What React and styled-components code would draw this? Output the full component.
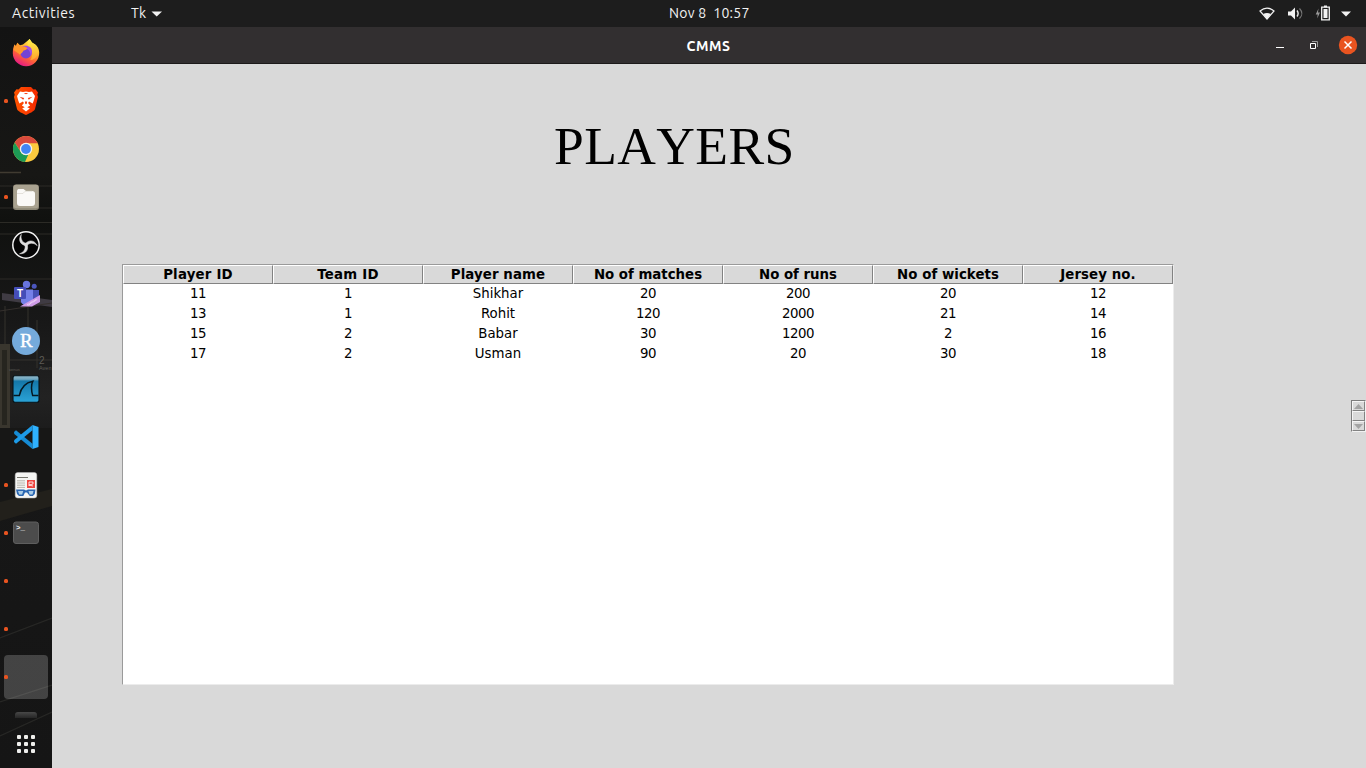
import React from "react";
import styled, { createGlobalStyle } from "styled-components";

const GlobalStyle = createGlobalStyle`
  * { box-sizing: border-box; }
  body { margin: 0; overflow: hidden; background: #d9d9d9; }
`;

const Desktop = styled.div`
  width: 1366px;
  height: 768px;
  display: flex;
  flex-direction: column;
  font-family: Ubuntu, "Noto Sans", sans-serif;
  overflow: hidden;
`;

const TopBar = styled.header`
  height: 27px;
  flex: none;
  background: #1d1d1d;
  color: #f2f2f2;
  display: grid;
  grid-template-columns: 1fr auto 1fr;
  align-items: center;
  font-size: 14px;
  line-height: 26px;
`;

const BarLeft = styled.div`
  display: flex;
  align-items: center;
  padding-left: 12px;
`;

const BarText = styled.span`
  display: block;
  white-space: pre;
  height: 27px;
  width: ${(p) => p.$width}px;
  margin-right: ${(p) => p.$gap || 0}px;
  letter-spacing: ${(p) => p.$spacing || 0}px;
`;

const Clock = styled(BarText)`
  margin-left: 54px;
`;

const BarRight = styled.div`
  display: flex;
  justify-content: flex-end;
  padding-right: 14px;
`;

const Workspace = styled.div`
  flex: 1;
  display: flex;
  min-height: 0;
`;

const Dock = styled.nav`
  width: 52px;
  flex: none;
  background: #151515;
  display: grid;
  overflow: hidden;

  > * { grid-area: 1 / 1; }
`;

const DockItems = styled.div`
  display: flex;
  flex-direction: column;
  padding-top: 2px;
  z-index: 1;
`;

const DockItem = styled.div`
  height: 48px;
  display: flex;
  align-items: center;
`;

const DockTile = styled.div`
  width: 44px;
  height: 44px;
  margin-left: 4px;
  border-radius: 4px;
  display: flex;
  align-items: center;
  justify-content: flex-start;
  background: ${(p) => (p.$active ? "rgba(255,255,255,0.2)" : "transparent")};
`;

const RunDot = styled.i`
  width: 4px;
  height: 4px;
  border-radius: 1.5px;
  flex: none;
  background: ${(p) => (p.$on ? "#e95420" : "transparent")};
`;

const DockIcon = styled.svg`
  width: 28px;
  height: 28px;
  margin-left: 4px;
  display: block;
`;

const HiddenLauncher = styled.div`
  width: 22px;
  height: 6px;
  margin: 11px 0 0 15px;
  border-radius: 3px 3px 0 0;
  background: linear-gradient(#484848, #262626);
`;

const AppsGrid = styled.div`
  display: grid;
  grid-template-columns: repeat(3, 4px);
  gap: 3px;
  margin: 17px 0 0 17px;
`;

const AppsDot = styled.i`
  height: 4px;
  border-radius: 1px;
  background: #eeeeec;
`;

const Window = styled.main`
  flex: 1;
  min-width: 0;
  display: flex;
  flex-direction: column;
  background: #d9d9d9;
`;

const TitleBar = styled.div`
  height: 37px;
  flex: none;
  background: #322f30;
  border-bottom: 1px solid #1c1a1a;
  display: grid;
  grid-template-columns: 1fr auto 1fr;
  align-items: start;
`;

const WindowTitle = styled.h1`
  grid-column: 2;
  margin: 0 1px 0 0;
  color: #fff;
  font-size: 14px;
  letter-spacing: 0.6px;
  line-height: 38px;
  height: 36px;
  font-weight: 700;
`;

const WindowControls = styled.div`
  display: flex;
  justify-content: flex-end;
  padding: 8px 8px 0 0;
`;

const Client = styled.div`
  flex: 1;
  display: flex;
  min-height: 0;
`;

const Content = styled.section`
  width: 1299px;
  flex: none;
`;

const Heading = styled.h2`
  margin: 0;
  padding: 52px 0 0 502px;
  height: 200px;
  color: #000;
  font: 400 53.5px/60px "Liberation Serif", serif;
  font-kerning: none;
  letter-spacing: 0.4px;
`;

const Table = styled.div`
  width: 1052px;
  height: 421px;
  margin-left: 70px;
  background: #fff;
  border: 1px solid;
  border-color: #9a9a9a #ececec #ececec #9a9a9a;
  color: #000;
  font-family: "DejaVu Sans", sans-serif;
  font-size: 13.33px;
`;

const Row = styled.div`
  display: grid;
  grid-template-columns: repeat(7, 150px);
  height: ${(p) => (p.$head ? 19 : 20)}px;
`;

const HeadCell = styled.div`
  background: #d9d9d9;
  border: 1px solid;
  border-color: #fff #828282 #828282 #fff;
  font-weight: 700;
  line-height: 17px;
  text-align: center;
  white-space: nowrap;
  letter-spacing: ${(p) => p.$spacing}px;
`;

const Cell = styled.div`
  line-height: 19px;
  text-align: center;
  white-space: nowrap;
  letter-spacing: ${(p) => (p.$numeric ? -0.45 : 0)}px;
`;

const ScrollBar = styled.div`
  width: 15px;
  height: 32px;
  margin-top: 336px;
  background: #c3c3c3;
  border: 1px solid;
  border-color: #7d7d7d #f2f2f2 #f2f2f2 #7d7d7d;
  display: flex;
  flex-direction: column;
`;

const ScrollPart = styled.div`
  height: 10px;
  background: #d9d9d9;
  border: 1px solid;
  border-color: #f5f5f5 #828282 #828282 #f5f5f5;
  display: flex;
  align-items: center;
  justify-content: center;
`;

const columns = [
  ["Player ID", 0.2],
  ["Team ID", 0.2],
  ["Player name", 0.1],
  ["No of matches", 0],
  ["No of runs", 0],
  ["No of wickets", 0.05],
  ["Jersey no.", 0.1],
];
const players = [
  [11, 1, "Shikhar", 20, 200, 20, 12],
  [13, 1, "Rohit", 120, 2000, 21, 14],
  [15, 2, "Babar", 30, 1200, 2, 16],
  [17, 2, "Usman", 90, 20, 30, 18],
];

const Firefox = () => (
  <DockIcon viewBox="0 0.7 28 28">
    <defs>
      <linearGradient id="fx" x1=".8" y1=".05" x2=".3" y2="1">
        <stop offset="0" stopColor="#fff44f" />
        <stop offset=".35" stopColor="#ffb52b" />
        <stop offset=".65" stopColor="#ff6038" />
        <stop offset="1" stopColor="#e5158b" />
      </linearGradient>
      <linearGradient id="fy" x1="0" y1="0" x2="0" y2="1">
        <stop offset="0" stopColor="#fff04a" />
        <stop offset="1" stopColor="#ffa62c" />
      </linearGradient>
    </defs>
    <path d="M2.500 6.200 4 8l1.300-3.500L8 7l3-.8L17.700.7l2.500 3.800c4 1.600 7 5 7 10A13.200 13.200 0 0 1 .8 15c0-3.600.6-6 1.700-8.800z" fill="url(#fx)" />
    <path d="M17.500.7c1.500 2 1.700 3.300 4 4.500 4.500 2.800 5.500 7 3.700 11.500-1.300 3.200-4 5-7 5 3-4 2.800-9-1-12.500-2.500-2.500-1.900-5.500.3-8.500z" fill="url(#fy)" />
    <circle cx="14" cy="14.500" r="5.700" fill="#7543d4" />
    <path d="M9 9c2-2 7-2.300 9.500.3C21 12 20 16 18.500 18c.3-4-1-6.500-4.500-7.800z" fill="#a550e5" />
    <path d="M2.500 6.200 4 8l1.300-3.500L8 8l4.500.2 2.800 1.500c-.2 1.500-2.300 2-4 2.800-.5 2-2.300 2.500-3.300 4C6 14 2.500 13 1.500 11.500z" fill="#ff982c" />
  </DockIcon>
);

const Brave = () => (
  <DockIcon viewBox="0 0 28 28">
    <defs>
      <linearGradient id="br" x1="0" x2="1">
        <stop offset="0" stopColor="#ff5500" />
        <stop offset="1" stopColor="#f52800" />
      </linearGradient>
    </defs>
    <path d="M9 0h10l2.500 2.500 2-.3L26 5.500l-.7 2.300.7 2.200-3 12c-.7 2.500-6 4.500-9 6-3-1.500-8.300-3.500-9-6L2 10l.7-2.200L2 5.500l2.500-3.300 2 .3z" fill="url(#br)" />
    <path d="m5 9 3-4.500 3 .5 3-.4 3 .4 3-.5L23 9l-1.400 5-1 2.500-3.500-2-1 1.500 2 2.500-4.100 2.500-4.100-2.500 2-2.500-1-1.500-3.500 2-1-2.500z" fill="#fff" />
    <path d="m7.500 9.700 4.700 1.200-1 1.800zm13 0-4.700 1.200 1 1.800zM11.700 6h4.600L14 7.200zM12.900 14.500h2.200l-.3 2.200-.8.500-.8-.5z" fill="#f43b10" />
    <path d="m10.200 21.500 3.800-2 3.800 2-3.800 2.900z" fill="#fff" />
  </DockIcon>
);

const Chrome = () => (
  <DockIcon viewBox="0 0 28 28">
    <circle cx="14" cy="14" r="13" fill="#fbca3e" />
    <path d="M2.700 7.500A13 13 0 0 1 25.700 8.200H14a6 6 0 0 0-5.200 8.600z" fill="#d94a3d" />
    <path d="M2.700 7.500 8.800 17a6 6 0 0 0 7.500 2.600L13 27A13 13 0 0 1 2.700 7.500z" fill="#1c9b55" />
    <circle cx="14" cy="14" r="6.200" fill="#f2f2f2" />
    <circle cx="14" cy="14" r="4.900" fill="#4285f4" />
  </DockIcon>
);

const Files = () => (
  <DockIcon viewBox="0 0 28 28">
    <rect x="1" y="1.500" width="26" height="25.500" rx="3" fill="#8e8877" />
    <rect x="1.700" y="1.700" width="24.600" height="23.500" rx="2.500" fill="#a9a290" />
    <path d="M5 8.500C5 6.500 6 6 7.500 6h4l2.500 2h6c2 0 3 1 3 2.800V20c0 2-1 3-3 3H8c-2 0-3-1-3-3z" fill="#faf9f7" />
    <path d="M5 10.500h6l2-2.200h7" fill="none" stroke="#dad7cf" strokeWidth=".7" />
  </DockIcon>
);

const obsBlade = "M14.800 14.700C9.200 14.600 5.200 9.500 9.300 3.400 8.400 7.800 10.200 11.600 14.300 12.300z";

const Obs = () => (
  <DockIcon viewBox="0 0 28 28">
    <circle cx="14" cy="14" r="13.200" fill="#050505" stroke="#f2f2f2" strokeWidth="1.500" />
    <g fill="#e0e0e0" stroke="#e0e0e0" strokeWidth=".5">
      {[0, 120, 240].map((angle) => (
        <path key={angle} d={obsBlade} transform={`rotate(${angle} 14 13.600)`} />
      ))}
    </g>
  </DockIcon>
);

const TeamsLabel = styled.text`
  font: 700 10px "Liberation Sans", sans-serif;
  fill: #fff;
`;

const Teams = () => (
  <DockIcon viewBox="0 -1 28 28">
    <circle cx="14.500" cy="4.500" r="3.700" fill="#6874dc" />
    <circle cx="22.200" cy="6.300" r="2.500" fill="#4b56bd" />
    <path d="M18 10h9v10c0 3-5 5-8 3z" fill="#4650b4" />
    <path d="M9 9.500h12V19c0 8-10 8-12 3z" fill="#7680e8" />
    <rect x="2" y="7" width="12" height="12" rx="1" fill="#454eb8" />
    <TeamsLabel x="4.900" y="16.600">T</TeamsLabel>
    <path d="m8 26.500 20-11.500v7l-8 4.500z" fill="#cf9ce8" />
    <path d="m15.500 25 9.500-5.600" stroke="#f1dcfa" strokeWidth="1.500" strokeDasharray="1 .5" />
  </DockIcon>
);

const RLabel = styled.text`
  font: 19px "Liberation Serif", serif;
  fill: #fff;
  stroke: #fff;
  stroke-width: 0.4px;
`;

const RStudio = () => (
  <DockIcon viewBox="0 0 28 28">
    <circle cx="14" cy="14" r="14" fill="#75aadb" />
    <RLabel x="8" y="20">R</RLabel>
  </DockIcon>
);

const Wireshark = () => (
  <DockIcon viewBox="0 0 28 28">
    <defs>
      <linearGradient id="ws" x1="0" y1="0" x2="0" y2="1">
        <stop offset="0" stopColor="#8fb9cc" />
        <stop offset=".13" stopColor="#6fa6c0" />
        <stop offset=".2" stopColor="#1477a9" />
        <stop offset="1" stopColor="#2ba4d8" />
      </linearGradient>
    </defs>
    <rect x="1" y=".8" width="26" height="26.500" rx="2" fill="url(#ws)" stroke="#06131a" strokeWidth="1.100" />
    <path d="M1.500 20.600h5.800C8.800 13 12 8 20.800 6.300c-1.800 3-1.600 9.500-.1 14.300h5.800" fill="none" stroke="#051822" strokeWidth="1.500" />
  </DockIcon>
);

const VSCode = () => (
  <DockIcon viewBox="0 0 28 28">
    <path d="m2 9 2-1.700 16.500 13.500V26L2.300 11z" fill="#168bd3" />
    <path d="m2 19 2 1.700L20.500 7.200V2L2.300 17z" fill="#1d9be8" />
    <path d="M20.500 2 26.500 4v20l-6 2z" fill="#2fb2ff" />
  </DockIcon>
);

const Reader = () => (
  <DockIcon viewBox="0 0 28 28">
    <rect x="3.200" y="1.500" width="21.600" height="25.500" rx="2.500" fill="#f5f5f3" stroke="#bbb" strokeWidth=".5" />
    <path d="M5 9.800h8M5 12h8M5 14.200h8M5 16.400h8" stroke="#b7b6ad" strokeWidth="1" />
    <path d="M5 6.500h11" stroke="#77776f" strokeWidth="1" />
    <rect x="15" y="9" width="8" height="8" fill="#ee4540" />
    <path d="M17 15v-4h4v2l-4 1 4 1" stroke="#fff" strokeWidth=".8" fill="none" />
    <path d="M4 18.500h8l2 1 2-1h7.500l-.7 4.500-2 2h-3L15 21.500h-2l-1.700 3.500H7L5 23z" fill="#2a66b1" />
    <path d="M6 20h5.300l-1.200 3.500H7.200zm10.500 0h5l-1 3.500h-3z" fill="#a9cbe6" />
  </DockIcon>
);

const TermPrompt = styled.text`
  font: 700 7.5px "Liberation Mono", monospace;
  fill: #eee;
`;

const Terminal = () => (
  <DockIcon viewBox="0 0 28 28">
    <rect x="1.500" y="3" width="25" height="21.500" rx="2.500" fill="#4c4c4c" stroke="#5f5f5f" />
    <TermPrompt x="4" y="10.500">&gt;_</TermPrompt>
  </DockIcon>
);

const dockApps = [
  [Firefox, false], [Brave, true], [Chrome, false], [Files, true], [Obs, false], [Teams, false],
  [RStudio, false], [Wireshark, false], [VSCode, false], [Reader, true], [Terminal, true],
  [null, true], [null, true], [null, true, true],
];

const WallLabel = styled.text`
  font: ${(p) => p.$size}px "Liberation Sans", sans-serif;
  fill: #5d5b55;
`;

const Wallpaper = () => (
  <svg width="52" height="741" viewBox="0 27 52 741">
    <defs>
      <linearGradient id="sky" x1="0" y1="0" x2="0" y2="1">
        <stop offset="0" stopColor="#131313" />
        <stop offset=".2" stopColor="#171715" />
        <stop offset=".26" stopColor="#10110f" />
        <stop offset=".4" stopColor="#181818" />
        <stop offset=".5" stopColor="#222222" />
        <stop offset=".58" stopColor="#171717" />
        <stop offset="1" stopColor="#151515" />
      </linearGradient>
    </defs>
    <rect y="27" width="52" height="741" fill="url(#sky)" />
    <path d="M0 172.500h21" stroke="#403b31" strokeWidth="1.500" />
    <path d="M0 186h52M0 208h52M0 222.500h52M0 234h52M0 279h52" stroke="#2c2b26" />
    <path d="M2 293 52 300v7L2 300z" fill="#3f3b43" />
    <path d="M0 311 52 303" stroke="#35302d" />
    <path d="M5 306v38M28 300v43M37 320v48" stroke="#35322d" />
    <path d="M0 344h10v85H0z" fill="#39362e" />
    <path d="M2 350h5v75H2z" fill="#26251f" />
    <path d="M10 360h42" stroke="#34332f" />
    <WallLabel x="39" y="364" $size={10}>2</WallLabel>
    <WallLabel x="39" y="370" $size={5.5}>Aven</WallLabel>
    <WallLabel x="9" y="371" $size={4}>venus</WallLabel>
    <path d="M0 428h52v65L0 521z" fill="#171716" />
    <path d="M0 502 52 489v17L0 521z" fill="#22201b" />
    <path d="m0 638 52-20M0 702l52-17M0 736l52-24" stroke="#272725" strokeWidth="1.200" />
  </svg>
);

export default function App() {
  return (
    <Desktop>
      <GlobalStyle />
      <TopBar>
        <BarLeft>
          <BarText $width={63} $gap={56} $spacing={0.57}>Activities</BarText>
          <BarText $width={16} $gap={4} $spacing={0.2}>Tk</BarText>
          <svg width="12" height="8"><path d="M.5 1.500h10.500L5.700 6.500z" fill="#f2f2f2" /></svg>
        </BarLeft>
        <Clock $width={82} $spacing={0.25}>Nov 8  10:57</Clock>
        <BarRight>
          <svg width="94" height="20" viewBox="1258 3.5 94 20">
            <path d="M1260 10.500c4.500-3.800 9.500-3.800 14 0l-7 8z" fill="none" stroke="#f2f2f2" strokeWidth="1.200" />
            <path d="M1263.200 13.500c2.500-1.200 5.100-1.200 7.600 0l-3.800 5z" fill="#f2f2f2" />
            <path d="M1288 11h3l4-4v12l-4-4h-3z" fill="#f2f2f2" />
            <path d="M1297 10c1.500 2 1.500 4 0 6" fill="none" stroke="#e8e8e8" strokeWidth="1.400" />
            <path d="M1299.500 8c3 3 3 7 0 10" fill="none" stroke="#777" strokeWidth="1.200" />
            <path d="m1318.500 8-2.800 6h2l-.5 4 2.800-6h-2z" fill="#999" />
            <path d="M1321.700 6.700h7.600v12.600h-7.600z" fill="none" stroke="#f2f2f2" strokeWidth="1.300" />
            <path d="M1324 5h3v2h-3zM1323.500 8.500h4v9h-4z" fill="#f2f2f2" />
            <path d="M1341 11h10l-5 5z" fill="#f2f2f2" />
          </svg>
        </BarRight>
      </TopBar>
      <Workspace>
        <Dock>
          <Wallpaper />
          <DockItems>
            {dockApps.map(([Icon, running, active], i) => (
              <DockItem key={i}>
                <DockTile $active={active}>
                  <RunDot $on={running} />
                  {Icon && <Icon />}
                </DockTile>
              </DockItem>
            ))}
            <HiddenLauncher />
            <AppsGrid>{Array.from({ length: 9 }, (_, i) => <AppsDot key={i} />)}</AppsGrid>
          </DockItems>
        </Dock>
        <Window>
          <TitleBar>
            <WindowTitle>CMMS</WindowTitle>
            <WindowControls>
              <svg width="86" height="20" viewBox="1272 35 86 20">
                <path d="M1276 47.500h8" stroke="#fff" />
                <path d="M1312 41.500h5.500v5.500" fill="none" stroke="#999" />
                <path d="M1310.500 43.500h5v5h-5z" fill="none" stroke="#fff" />
                <circle cx="1348" cy="45" r="9.200" fill="#e95420" />
                <path d="m1344.500 41.500 7 7m0-7-7 7" stroke="#fff" strokeWidth="1.500" />
              </svg>
            </WindowControls>
          </TitleBar>
          <Client>
            <Content>
              <Heading>PLAYERS</Heading>
              <Table>
                <Row $head>{columns.map(([label, spacing]) => <HeadCell key={label} $spacing={spacing}>{label}</HeadCell>)}</Row>
                {players.map((row) => (
                  <Row key={row[0]}>{row.map((v, i) => <Cell key={i} $numeric={typeof v === "number"}>{v}</Cell>)}</Row>
                ))}
              </Table>
            </Content>
            <ScrollBar>
              <ScrollPart><svg width="9" height="5"><path d="M4.500 0 9 5H0z" fill="#a3a3a3" /></svg></ScrollPart>
              <ScrollPart />
              <ScrollPart><svg width="9" height="5"><path d="M0 0h9L4.500 5z" fill="#a3a3a3" /></svg></ScrollPart>
            </ScrollBar>
          </Client>
        </Window>
      </Workspace>
    </Desktop>
  );
}
